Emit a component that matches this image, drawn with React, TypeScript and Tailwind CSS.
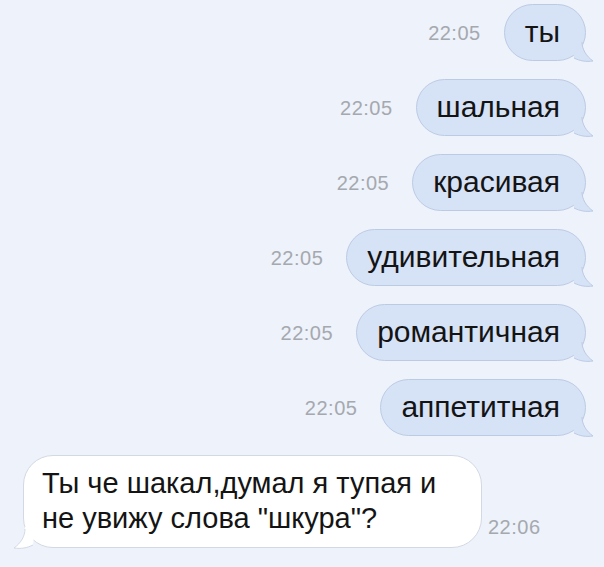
import React from "react";

const OUT = [
  { text: "ты", time: "22:05" },
  { text: "шальная", time: "22:05" },
  { text: "красивая", time: "22:05" },
  { text: "удивительная", time: "22:05" },
  { text: "романтичная", time: "22:05" },
  { text: "аппетитная", time: "22:05" },
];

const TailRight = () => (
  <svg className="absolute -right-[11px] -bottom-[4px]" width="24" height="24" viewBox="0 0 24 24">
    <path d="M0 0 L10 0 C10 9 14 16 21 21 C14 22 8 21 2 18 Z" fill="#d6e2f6" />
    <path d="M10 2 C10 9 14 16 21 21 C14 22 8 21 2 18" fill="none" stroke="#bccbe4" strokeWidth="1" />
  </svg>
);

const TailLeft = () => (
  <svg className="absolute -left-[13px] -bottom-[4px]" width="24" height="24" viewBox="0 0 24 24">
    <path d="M24 0 L14 0 C14 9 10 16 3 21 C10 22 16 21 22 18 Z" fill="#ffffff" />
    <path d="M14 2 C14 9 10 16 3 21 C10 22 16 21 22 18" fill="none" stroke="#d3d9e4" strokeWidth="1" />
  </svg>
);

const Out = ({ text, time }: { text: string; time: string }) => (
  <div className="flex items-center justify-end gap-[23px] pr-[18px]">
    <span className="text-[20px] font-light text-[#a5a9af] tracking-[0.5px]">{time}</span>
    <div className="relative h-[57px] flex items-center rounded-[29px] border border-[#bccbe4] bg-[#d6e2f6] pl-[20px] pr-[25px]">
      <span className="text-[30px] leading-none text-[#141414] -mt-[2px]">{text}</span>
      <TailRight />
    </div>
  </div>
);

export default function App() {
  return (
    <div
      className="w-[604px] h-[567px] bg-[#eef2fa] overflow-hidden flex flex-col pt-[4px]"
      style={{ fontFamily: '"Liberation Sans", Arial, sans-serif' }}
    >
      <div className="flex flex-col gap-[18px]">
        {OUT.map((m, i) => (
          <Out key={i} text={m.text} time={m.time} />
        ))}
      </div>
      <div className="flex items-end gap-[6px] pl-[23px] mt-[19px]">
        <div className="relative w-[459px] h-[93px] rounded-[30px] border border-[#d3d9e4] bg-white pl-[18px] pt-[10px]">
          <p className="text-[29px] leading-[35px] text-[#141414]">
            Ты че шакал,думал я тупая и
            <br />
            не увижу слова "шкура"?
          </p>
          <TailLeft />
        </div>
        <span className="text-[20px] font-light text-[#a5a9af] tracking-[0.5px] mb-[6px]">22:06</span>
      </div>
    </div>
  );
}
